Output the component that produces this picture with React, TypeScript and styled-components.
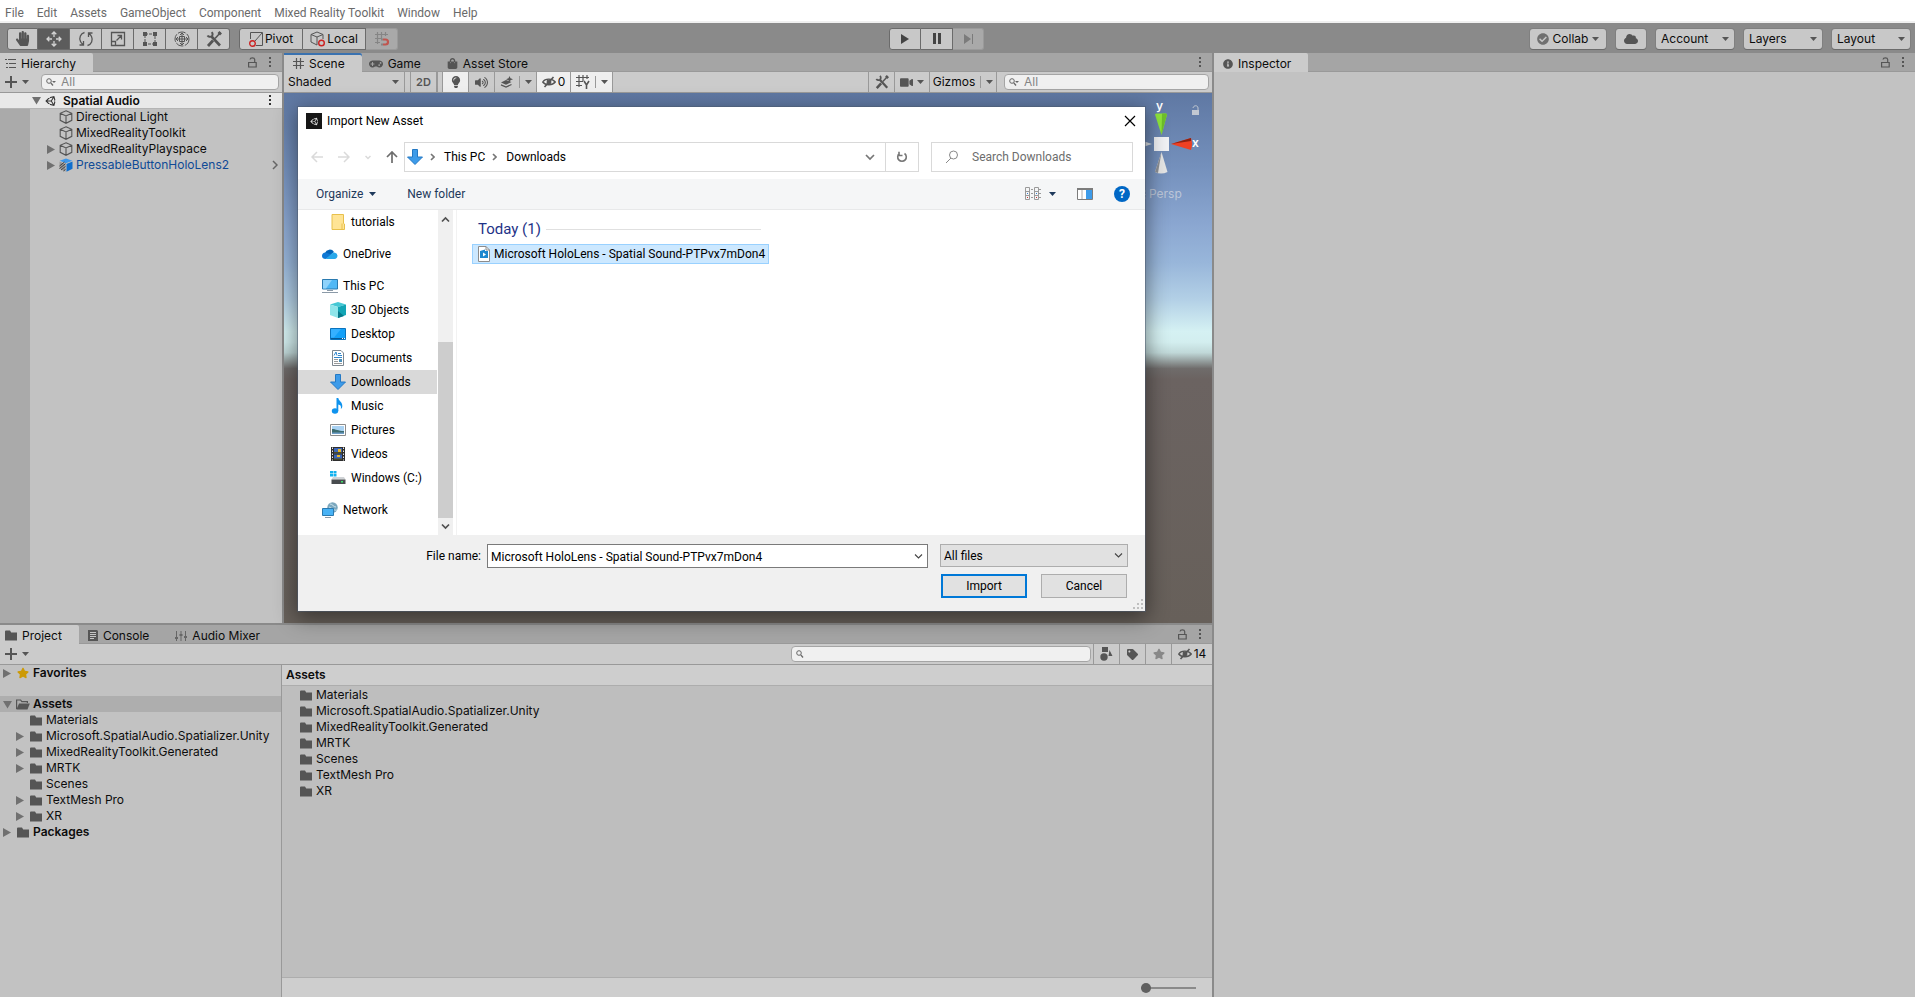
import React from 'react';
import styled, { createGlobalStyle, css } from 'styled-components';
import {
  FaUnity, FaHandPaper, FaGamepad, FaShoppingBag, FaInfoCircle, FaCloud, FaTag, FaStar,
  FaLightbulb, FaVolumeUp, FaVideo, FaCheckCircle,
} from 'react-icons/fa';

const GlobalStyle = createGlobalStyle`
  *, *::before, *::after { box-sizing: border-box; }
  body { margin: 0; background: #8a8a8a; }
  button, input, select { font: inherit; color: inherit; margin: 0; padding: 0; border: 0; background: none; border-radius: 0; outline: none; }
  select, input { appearance: none; }
  svg { display: block; flex: none; }
  ul { list-style: none; margin: 0; padding: 0; }
`;

const unityFont = css`font: 400 12px/16px Inter, "Liberation Sans", sans-serif;`;
const windowsFont = css`font: 400 12px/16px Roboto, "Liberation Sans", sans-serif;`;

/* ---------- icons ---------- */

type IconProps = { size?: number; color?: string };

const Caret = ({ color = '#555' }: IconProps) => (
  <svg width="7" height="4" viewBox="0 0 7 4"><path d="M0 0h7L3.5 4z" fill={color} /></svg>
);

const Fold = ({ open }: { open?: boolean }) => (
  <svg width="9" height="9" viewBox="0 0 9 9">
    <path d={open ? 'M0 1h9L4.5 8.500z' : 'M0 0v9l8-4.500z'} fill="#707070" />
  </svg>
);

const MoveIcon = () => (
  <svg width="16" height="16" viewBox="0 0 16 16" fill="none" stroke="#d2d2d2" strokeWidth="1.300">
    <path d="M8 1v5M8 10v5M1 8h5M10 8h5M5.700 3.300L8 1l2.300 2.300M5.700 12.700L8 15l2.300-2.300M3.300 5.700L1 8l2.300 2.300M12.700 5.700L15 8l-2.300 2.300" />
  </svg>
);

const RotateIcon = () => (
  <svg width="16" height="16" viewBox="0 0 16 16" fill="none" stroke="#555" strokeWidth="1.300">
    <path d="M6.500 1.500C2.500 2.500.8 7 2.500 10.500c.6 1.300 1.300 2 2.500 3M1.500 14h4v-4M9.500 14.500c4-1 5.700-5.500 4-9-.6-1.300-1.300-2-2.500-3M14.500 2h-4v4" />
  </svg>
);

const ScaleIcon = () => (
  <svg width="16" height="16" viewBox="0 0 16 16" fill="none" stroke="#555" strokeWidth="1.300">
    <path d="M1.500 1.500h13v13h-13zM1.500 10.500h4v4M6.500 9.500l5-5M7.500 4.500h4v4" />
  </svg>
);

const RectIcon = () => (
  <svg width="16" height="16" viewBox="0 0 16 16">
    <path d="M3 3h10v10H3z" fill="none" stroke="#555" strokeDasharray="3 1" />
    <path d="M1 1h4v4H1zM11 1h4v4h-4zM1 11h4v4H1zM11 11h4v4h-4z" fill="#555" />
  </svg>
);

const TransformIcon = () => (
  <svg width="16" height="16" viewBox="0 0 16 16" fill="none" stroke="#555">
    <circle cx="8" cy="8" r="7" strokeDasharray="8 1.500" />
    <path d="M8 2v12M2 8h12M6 4l2-2 2 2M6 12l2 2 2-2M4 6L2 8l2 2M12 6l2 2-2 2M5.500 5.500h5v5h-5z" />
  </svg>
);

const ToolsIcon = ({ size = 16 }: IconProps) => (
  <svg width={size} height={size} viewBox="0 0 16 16" fill="none" stroke="#555">
    <path d="M5.500 5.500l8.500 9" strokeWidth="2.600" />
    <path d="M1.500 4.500c1 1.500 3 1.700 4.200.8 1.200-1 1.200-3 0-4.200" strokeWidth="2" />
    <path d="M14.500 1.500L9 7.500" strokeWidth="1.600" />
    <path d="M12.500 1L15 3.500M7 9.500L2 15" strokeWidth="2.800" />
  </svg>
);

const PivotIcon = () => (
  <svg width="15" height="16" viewBox="0 0 15 16" fill="none" stroke="#555">
    <path d="M1.500 8V1.500h12v13H7M13 2L6 10" />
    <circle cx="3.500" cy="12.500" r="2.800" stroke="#c22" strokeWidth="1.400" />
  </svg>
);

const Cube = ({ size = 14, color = '#555' }: IconProps) => (
  <svg width={size} height={size} viewBox="0 0 14 14" fill="none" stroke={color} strokeWidth="1.100">
    <path d="M7 .8l5.800 2.500v7L7 13.300l-5.800-3v-7zM1.200 3.300L7 6l5.800-2.700M7 6v7.300" />
  </svg>
);

const LocalIcon = () => (
  <svg width="16" height="16" viewBox="0 0 16 16" fill="none" stroke="#555">
    <path d="M7 1l6 2.500V8M7 14l-6-3V3.500L7 1M1 3.500L7 6l6-2.500M7 6v8" />
    <circle cx="11.500" cy="12" r="2.800" stroke="#c22" strokeWidth="1.400" />
  </svg>
);

const SnapIcon = () => (
  <svg width="16" height="16" viewBox="0 0 16 16" fill="none" stroke="#858585" strokeWidth="1.200">
    <path d="M3.500 1v12M7.500 1v7M11.500 1v4M1 3.500h13M1 7.500h6M1 11.500h5" />
    <path d="M9 8.500h2.500a2.500 2.500 0 010 5H9" stroke="#c0564f" strokeWidth="2.200" />
    <path d="M7 8.500h2M7 13.500h2" strokeWidth="2.200" />
  </svg>
);

const PrefabCube = () => (
  <svg width="14" height="14" viewBox="0 0 14 14">
    <path d="M7 .5l6.300 2.300L7 5.300.7 2.800z" fill="#3d97ea" />
    <path d="M7.500 6l6-2.500v7.200l-6 3z" fill="#0f6fcf" />
    <path d="M.5 3.500l6 2.500v7.700l-6-3z" fill="#999" />
    <path d="M.5 8l5-4M.5 10.500l6-4.800M2 12l4.500-3.600M4.500 13l2-1.600" stroke="#444" />
  </svg>
);

const Dots = ({ color = '#555' }: IconProps) => (
  <svg width="3" height="11" viewBox="0 0 3 11" fill={color}><path d="M0 0h2v2H0zM0 4h2v2H0zM0 8h2v2H0z" /></svg>
);

const LockIcon = () => (
  <svg width="9" height="11" viewBox="0 0 9 11" fill="none" stroke="#555" strokeWidth="1.200">
    <path d="M.6 5.500h7.600v4.500H.6zM2 2.500C2.300.3 6.500.3 6.700 2.500v3" />
  </svg>
);

const HierarchyIcon = () => (
  <svg width="11" height="9" viewBox="0 0 11 9" fill="#555">
    <path d="M0 0h2v1H0zM3 0h8v1H3zM1 4h2v1H1zM4 4h7v1H4zM1 8h2v1H1zM4 8h7v1H4z" />
  </svg>
);

const HashIcon = () => (
  <svg width="11" height="11" viewBox="0 0 11 11" stroke="#555" strokeWidth="1.200"><path d="M3.500 0v11M7.500 0v11M0 3.500h11M0 7.500h11" /></svg>
);

const PlusIcon = () => (
  <svg width="12" height="12" viewBox="0 0 12 12" fill="#555"><path d="M5 0h2v5h5v2H7v5H5V7H0V5h5z" /></svg>
);

const SearchIcon = ({ menu }: { menu?: boolean }) => (
  <svg width="10" height="8" viewBox="0 0 10 8" fill="none" stroke="#666">
    <circle cx="3" cy="3" r="2.300" /><path d="M4.800 4.800L7 7.500" strokeWidth="1.300" />
    {menu && <path d="M6 3h4L8 5z" fill="#666" stroke="none" />}
  </svg>
);

const FolderIcon = () => (
  <svg width="12" height="11" viewBox="0 0 12 11"><path d="M0 1.500Q0 .5 1 .5h4l1.200 2H12v8H0z" fill="#555" /></svg>
);

const OpenFolderIcon = () => (
  <svg width="14" height="11" viewBox="0 0 14 11">
    <path d="M.6 10V1h4l1.200 1.600h5.600V4" fill="none" stroke="#555" strokeWidth="1.200" />
    <path d="M3 4.500h10.800l-2.300 6H.4z" fill="#555" />
  </svg>
);

const ConsoleIcon = () => (
  <svg width="10" height="11" viewBox="0 0 10 11"><path d="M1 0h8l1 1v10H0V0z" fill="#555" /><path d="M2 2.500h6M2 4.500h6M2 6.500h6M2 8.500h4" stroke="#c4c4c4" /></svg>
);

const MixerIcon = () => (
  <svg width="12" height="10" viewBox="0 0 12 10" fill="#666">
    <path d="M1 0h1v10H1zM5.500 0h1v10h-1zM10 0h1v10h-1zM0 6h3v2H0zM4.500 3h3v2h-3zM9 5h3v2H9z" />
  </svg>
);

const EffectsIcon = () => (
  <svg width="14" height="12" viewBox="0 0 14 12">
    <path d="M1 6.500l5-2.500 5.500 2L6 8.700z" fill="#555" />
    <path d="M1 8.800L6 11l5.500-2.500" fill="none" stroke="#555" strokeWidth="1.300" />
    <path d="M9.500 0l1 2.300 2.500.9-2.500 1-1 2.300-1-2.300-2.500-1 2.500-.9z" fill="#555" />
  </svg>
);

const EyeOffIcon = () => (
  <svg width="14" height="12" viewBox="0 0 14 12" fill="none" stroke="#555" strokeWidth="1.300">
    <path d="M.7 6C3 2.500 10 2 13.300 6 10.500 9.500 3.500 9.800.7 6z" /><circle cx="7" cy="6" r="1.800" fill="#555" /><path d="M2.500 11L11.500 1" strokeWidth="1.600" />
  </svg>
);

const GridYIcon = () => (
  <svg width="14" height="14" viewBox="0 0 14 14" fill="none" stroke="#555" strokeWidth="1.200">
    <path d="M3 0v12M7 0v6M11 0v4M0 2.500h13M0 6.500h7M0 10.500h6" /><path d="M8 6l2.500 4L13 6M10.500 10v4" strokeWidth="1.600" />
  </svg>
);

const ShapesIcon = () => (
  <svg width="13" height="14" viewBox="0 0 13 14" fill="#555"><path d="M2 0h6v5H2zM9.500 3l3 6h-4z" /><circle cx="4" cy="10" r="3.700" /></svg>
);

const PlayIcon = () => (
  <svg width="10" height="12" viewBox="0 0 10 12"><path d="M1 1v10l8-5z" fill="#444" /></svg>
);

const StepIcon = () => (
  <svg width="11" height="12" viewBox="0 0 11 12" fill="#7b7b7b"><path d="M1 1v10l7-5zM9 1h1v10H9z" /></svg>
);

const Stroke = ({ d, w = 12, h = 12, color = '#767676', sw = 1.5 }: { d: string; w?: number; h?: number; color?: string; sw?: number }) => (
  <svg width={w} height={h} viewBox={`0 0 ${w} ${h}`} fill="none" stroke={color} strokeWidth={sw}><path d={d} /></svg>
);

const DownloadArrow = () => (
  <svg width="16" height="16" viewBox="0 0 16 16"><path d="M5.500.5h5V8h5L8 15.500.5 8h5z" fill="#3d9be9" stroke="#2479c4" /></svg>
);

const YellowFolder = () => (
  <svg width="16" height="16" viewBox="0 0 16 16"><path d="M2 .5h11.500v9l1 .5v5.500H2z" fill="#ffe495" stroke="#e8c04c" /><path d="M12 9.500v5.500" stroke="#e8c04c" /></svg>
);

const OneDriveIcon = () => (
  <svg width="16" height="16" viewBox="0 0 16 16">
    <path d="M3 7a5 5 0 019-1l-6 5z" fill="#0364b8" /><path d="M3.500 6.500A3.600 3.600 0 000 10c0 2 1.500 3 3.500 3L11 9z" fill="#0f78d4" />
    <path d="M10 7.500a3 3 0 013-.8 3.200 3.200 0 01-.5 6.300H3.500z" fill="#28a8ea" />
  </svg>
);

const PcIcon = () => (
  <svg width="16" height="16" viewBox="0 0 16 16"><path d="M.5 1.500h15v9.500H.5z" fill="#51b8f5" stroke="#2a7ab0" /><path d="M1 2h9L4 10.500H1z" fill="#8fd3fb" /><path d="M5 12.500h6M0 14.500h16" stroke="#8b9aa8" /></svg>
);

const ObjectsIcon = () => (
  <svg width="16" height="16" viewBox="0 0 16 16"><path d="M8 0l8 2.500L8 5 0 2.500z" fill="#45c8d4" /><path d="M0 2.500L8 5v11l-8-3z" fill="#8fe5ea" /><path d="M16 2.500L8 5v11l8-3z" fill="#13a5b5" /><path d="M8 9l6 5-6 2z" fill="#07798a" /></svg>
);

const DesktopIcon = () => (
  <svg width="16" height="16" viewBox="0 0 16 16"><path d="M.5 2.500h15v11H.5z" fill="#12a0f8" stroke="#0a73bd" /><path d="M1 3h10L4 11.500H1z" fill="#35b0ff" /><path d="M1 12.500h14" stroke="#075a96" /><path d="M12 12.500h1M14 12.500h1" stroke="#fff" /></svg>
);

const DocumentIcon = () => (
  <svg width="16" height="16" viewBox="0 0 16 16"><path d="M2.500.5h8.500l2.500 2.500v12.500h-11z" fill="#fff" stroke="#7d8790" /><path d="M4 5.500l2-3.500 1 3.500M8 3.500h3M8 5.500h4M4 7.500h8" fill="none" stroke="#2f86cc" /><path d="M4 9.500h4M4 11.500h4M4 13.500h8" stroke="#9a9a9a" /><path d="M9 9h3v3H9z" fill="#4b8fb8" /></svg>
);

const MusicIcon = () => (
  <svg width="16" height="16" viewBox="0 0 16 16" fill="#0f93ee"><ellipse cx="5" cy="13" rx="3.200" ry="2.700" /><path d="M6.500 0h1.800c.3 3 4.500 4 4 8.500-.2 1.500-.8 2-1.500 2.500.8-3-.5-4-2.500-4.500V13H6.500z" /></svg>
);

const PictureIcon = () => (
  <svg width="16" height="16" viewBox="0 0 16 16"><path d="M.5 2.500h15v11H.5z" fill="#fff" stroke="#8c8c8c" /><path d="M2 4h12v8H2z" fill="#a9d2f3" /><path d="M2 7c4 0 6 2 12 2v3H2z" fill="#3c6c70" /><path d="M2 10.500h12V12H2z" fill="#6f9fc8" /></svg>
);

const VideoIcon = () => (
  <svg width="16" height="16" viewBox="0 0 16 16"><path d="M1 1h14v14H1z" fill="#2d2d2d" /><path d="M4 2h8v5.500H4zM4 8.500h8V14H4z" fill="#3c66b8" /><path d="M8 3h3v3H8zM7 9h3v2H7z" fill="#e8b92e" /><path d="M4 6h8v1.500H4zM4 12.500h8V14H4z" fill="#4a4a2a" /><path d="M2.500 1.500v13M13.500 1.500v13" stroke="#e8e8e8" strokeDasharray="1.500 1.500" /></svg>
);

const DriveIcon = () => (
  <svg width="16" height="16" viewBox="0 0 16 16"><path d="M0 1h3v2.500H0zM3.500 1h3v2.500h-3zM0 4h3v2.500H0zM3.500 4h3v2.500h-3z" fill="#12b1ee" /><path d="M3 7h11l1.500 2.500H1.500z" fill="#d0d3d6" /><path d="M1.500 9.500h14V14h-14z" fill="#484c4f" /><path d="M11 11h2v1.500h-2z" fill="#3fe06a" /></svg>
);

const NetworkIcon = () => (
  <svg width="16" height="16" viewBox="0 0 16 16"><circle cx="10.500" cy="5.500" r="5.200" fill="#7ba7bd" /><path d="M8 2c3 0 3 3 6 3M7 5c3 1 5 4 8 3" stroke="#c9e2ee" fill="none" /><path d="M.5 6.500h11v7H.5z" fill="#48b2f5" stroke="#2a7ab0" /><path d="M3 15.500h6" stroke="#8b9aa8" /></svg>
);

const MediaFileIcon = () => (
  <svg width="12" height="16" viewBox="0 0 12 16"><path d="M.5.5H8l3.500 3.500v11.500H.5z" fill="#fff" stroke="#8c8c8c" /><path d="M8 .5V4h3.500" fill="none" stroke="#8c8c8c" /><path d="M2 5l5-1.500V5h3v7H2z" fill="#1e88cf" /><path d="M5 6.500l3 2-3 2z" fill="#fff" /></svg>
);

const ViewModeIcon = () => (
  <svg width="18" height="14" viewBox="0 0 18 14" fill="none" stroke="#9a9a9a">
    <path d="M.5.5h4v12h-4zM9.500.5h4v12h-4zM0 4.500h5M0 8.500h5M9 4.500h5M9 8.500h5M6 2.500h2M6 6.500h2M6 10.500h2M14 2.500h2M14 6.500h2M14 10.500h2" />
    <path d="M2 6h1v1H2zM11 6h1v1h-1z" fill="#3b7fd0" stroke="none" /><path d="M2 10h1v1H2zM11 10h1v1h-1z" fill="#c33" stroke="none" />
  </svg>
);

const PreviewIcon = () => (
  <svg width="16" height="12" viewBox="0 0 16 12"><path d="M.5.5h15v11H.5z" fill="#fff" stroke="#7c7c7c" /><path d="M0 1h16" stroke="#7c7c7c" strokeWidth="2" /><path d="M5 2v9" stroke="#aaa" /><path d="M9 2h6v9H9z" fill="#3d9be9" /></svg>
);

/* ---------- page frame ---------- */

const Page = styled.div`
  ${unityFont}
  min-height: 100vh;
  display: flex;
  flex-direction: column;
  color: #0c0c0c;
  background: #8a8a8a;
`;

const MenuBar = styled.nav`
  ${windowsFont}
  display: flex;
  align-items: center;
  gap: 13px;
  height: 23px;
  padding: 4px 5px 0;
  background: #fff;
  border-bottom: 2px solid #f0f0f0;
  color: #6a6a6a;
`;

const Toolbar = styled.header`
  display: flex;
  align-items: center;
  height: 30px;
  padding: 1px 5px 0 7px;
`;

const Spacer = styled.span<{ $grow?: number }>`
  flex: ${(p) => p.$grow ?? 1} 1 0;
`;

const ButtonGroup = styled.div`
  display: flex;
  margin-right: 9px;
`;

const ToolButton = styled.button<{ $active?: boolean; $faded?: boolean; $width?: number }>`
  display: flex;
  align-items: center;
  justify-content: center;
  gap: 1px;
  width: ${(p) => p.$width ?? 32}px;
  height: 22px;
  border: 1px solid ${(p) => (p.$faded ? '#9a9a9a' : '#6b6b6b')};
  background: ${(p) => (p.$active ? '#5c5c5c' : p.$faded ? '#a9a9a9' : '#c8c8c8')};
  & + & { border-left-width: 0; }
  &:first-child { border-radius: 3px 0 0 3px; }
  &:last-child { border-radius: 0 3px 3px 0; }
  color: ${(p) => (p.$faded ? '#7b7b7b' : '#0c0c0c')};
`;

const RightControls = styled.div`
  display: flex;
  gap: 10px;
`;

const controlBox = css`
  height: 20px;
  border-radius: 3px;
  background: #c8c8c8;
  box-shadow: 0 1px 0 #6b6b6b, 0 0 0 1px #808080;
`;

const TopButton = styled.button<{ $width: number }>`
  ${controlBox}
  display: flex;
  align-items: center;
  justify-content: center;
  gap: 4px;
  width: ${(p) => p.$width}px;
`;

const SelectWrap = styled.label<{ $boxed?: boolean; $width: number; $inset: number }>`
  position: relative;
  display: flex;
  align-items: center;
  width: ${(p) => p.$width}px;
  ${(p) => p.$boxed && controlBox}
  select { width: 100%; padding-left: ${(p) => p.$inset}px; line-height: 20px; }
  svg { position: absolute; right: 5px; pointer-events: none; }
`;

const Workspace = styled.main`
  flex: 1;
  display: grid;
  grid-template-columns: 1212fr 701fr;
  gap: 2px;
`;

const MainColumn = styled.div`
  display: grid;
  grid-template-rows: 570fr 372fr;
  gap: 2px;
  min-width: 0;
`;

const UpperRow = styled.div`
  display: grid;
  grid-template-columns: 282px 1fr;
  gap: 2px;
`;

const Panel = styled.section`
  display: flex;
  flex-direction: column;
  min-width: 0;
  background: #c2c2c2;
`;

const TabStrip = styled.div`
  display: flex;
  align-items: stretch;
  height: 19px;
  padding-right: 6px;
  background: #a5a5a5;
  border-bottom: 1px solid #999;
`;

const Tab = styled.button<{ $active?: boolean; $accent?: boolean; $pad?: number }>`
  display: flex;
  align-items: center;
  gap: 5px;
  height: 19px;
  padding: 2px 17px 0 ${(p) => p.$pad ?? 9}px;
  background: ${(p) => (p.$active ? '#cbcbcb' : 'transparent')};
  box-shadow: ${(p) => (p.$accent ? 'inset 0 2px 0 #3a72b0' : 'none')};
  border-radius: 0 2px 0 0;
`;

const IconButton = styled.button`
  display: flex;
  align-items: center;
  justify-content: center;
  min-width: 12px;
  margin-left: 6px;
`;

const PanelBar = styled.div<{ $end?: number }>`
  display: flex;
  align-items: center;
  height: 21px;
  padding-right: ${(p) => p.$end ?? 3}px;
  background: #cbcbcb;
  border-bottom: 1px solid #999;
`;

const AddButton = styled.button`
  display: flex;
  align-items: center;
  gap: 5px;
  padding-left: 5px;
  margin-right: 12px;
`;

const SearchBox = styled.label<{ $width?: number }>`
  flex: ${(p) => (p.$width ? `0 0 ${p.$width}px` : '1')};
  min-width: 0;
  display: flex;
  align-items: center;
  gap: 5px;
  height: 16px;
  padding: 0 4px;
  border: 1px solid #a5a5a5;
  border-radius: 4px;
  background: #f0f0f0;
  input { flex: 1; width: 0; min-width: 0; height: 14px; }
  input::placeholder { color: #858585; opacity: 1; }
`;

const BarButton = styled.button<{ $width: number; $on?: boolean; $last?: boolean }>`
  display: flex;
  align-items: center;
  justify-content: center;
  gap: 2px;
  flex: none;
  width: ${(p) => p.$width}px;
  height: 20px;
  border-left: 1px solid #999;
  border-right: ${(p) => (p.$last ? '1px solid #999' : '0')};
  background: ${(p) => (p.$on ? '#efefef' : 'transparent')};
  color: #0c0c0c;
`;

const ModeLabel = styled.b`
  font-weight: 600;
  font-size: 11px;
  color: #555;
`;

const InnerRule = styled.span`
  width: 1px;
  height: 12px;
  margin: 0 3px;
  background: #999;
`;

/* ---------- hierarchy ---------- */

const SceneRow = styled.div`
  display: flex;
  align-items: center;
  gap: 4px;
  height: 16px;
  padding: 0 10px 0 32px;
  background: #e9e9e9;
  border-bottom: 1px solid #b5b5b5;
  font-weight: 600;
`;

const SceneName = styled.span`
  flex: 1;
  padding-left: 2px;
`;

const HierarchyBody = styled.div`
  flex: 1;
  display: grid;
  grid-template-columns: 30px 1fr;
`;

const Gutter = styled.div`
  background: #aaa;
`;

const ObjectRow = styled.li<{ $prefab?: boolean }>`
  display: flex;
  align-items: center;
  height: 16px;
  padding: 0 4px 0 17px;
  gap: 3px;
  color: ${(p) => (p.$prefab ? '#0f4a96' : '#0c0c0c')};
`;

const FoldSlot = styled.span<{ $width?: number }>`
  flex: none;
  width: ${(p) => p.$width ?? 9}px;
`;

/* ---------- scene ---------- */

const Viewport = styled.div`
  position: relative;
  flex: 1;
  min-height: 420px;
  background: linear-gradient(#5f78a3 0%, #7490bc 14%, #8ba7d1 25%, #98b6da 32%, #b3d0e6 39%, #d5f1f3 45%, #d3eeef 47%, #c0d8d8 49%, #6f6c6b 52%, #6b6361 54%, #67605a 100%);
`;

const Gizmo = styled.div`
  position: absolute;
  top: 4px;
  right: 0;
  width: 72px;
  display: flex;
  flex-direction: column;
  gap: 9px;
`;

const ProjectionButton = styled.button`
  display: flex;
  align-items: center;
  gap: 3px;
  padding-left: 1px;
  color: #bcc6d8;
`;

/* ---------- import dialog ---------- */

const Dialog = styled.div`
  ${windowsFont}
  position: absolute;
  z-index: 2;
  top: 14px;
  left: 14px;
  right: 67px;
  bottom: 12px;
  display: flex;
  flex-direction: column;
  background: #fff;
  color: #000;
  box-shadow: 0 0 0 1px #4b5a6e80, 0 5px 20px 2px #00000073;
`;

const TitleBar = styled.div`
  display: flex;
  align-items: center;
  gap: 5px;
  height: 28px;
  padding: 0 9px 0 8px;
`;

const DialogTitle = styled.h1`
  flex: 1;
  margin: 0;
  font-size: 12px;
  font-weight: 400;
`;

const AppBadge = styled.span`
  display: grid;
  place-items: center;
  width: 16px;
  height: 16px;
  background: #161616;
`;

const PlainButton = styled.button`
  display: flex;
  align-items: center;
  gap: 6px;
`;

const NavRow = styled.div`
  display: flex;
  align-items: center;
  height: 44px;
  padding: 0 12px 0 13px;
`;

const NavButtons = styled.div`
  display: flex;
  align-items: center;
  gap: 15px;
  width: 93px;
`;

const AddressBar = styled.div`
  flex: 1;
  display: flex;
  align-items: center;
  height: 30px;
  padding-left: 2px;
  border: 1px solid #d9d9d9;
`;

const Crumb = styled.button`
  margin: 0 9px 0 7px;
`;

const RefreshButton = styled.button`
  display: grid;
  place-items: center;
  width: 33px;
  height: 28px;
  margin-left: 10px;
  border-left: 1px solid #d9d9d9;
`;

const DialogSearch = styled.label`
  display: flex;
  align-items: center;
  gap: 13px;
  width: 202px;
  height: 30px;
  margin-left: 12px;
  padding: 0 13px;
  border: 1px solid #d9d9d9;
  input { flex: 1; width: 0; min-width: 0; }
  input::placeholder { color: #6d6d6d; opacity: 1; }
`;

const CommandBar = styled.div`
  display: flex;
  align-items: center;
  height: 31px;
  padding: 0 15px 0 18px;
  background: #f5f6f7;
  border-bottom: 1px solid #e8e9ea;
  color: #1e395b;
`;

const CommandGroup = styled.div<{ $gap: number }>`
  display: flex;
  align-items: center;
  gap: ${(p) => p.$gap}px;
`;

const HelpBadge = styled.button`
  width: 16px;
  height: 16px;
  border-radius: 50%;
  background: #0067c5;
  color: #fff;
  font-size: 12px;
  font-weight: 700;
  line-height: 16px;
  text-align: center;
`;

const DialogBody = styled.div`
  flex: 1;
  display: grid;
  grid-template-columns: 140px 15px 1fr;
  min-height: 0;
`;

const PlaceList = styled.ul`
  overflow: hidden;
`;

const Place = styled.li<{ $level: number; $gap?: boolean; $selected?: boolean }>`
  display: flex;
  align-items: center;
  gap: 5px;
  height: 24px;
  margin: ${(p) => (p.$gap ? 8 : 0)}px 1px 0 0;
  padding-left: ${(p) => 16 + p.$level * 8}px;
  white-space: nowrap;
  background: ${(p) => (p.$selected ? '#d9d9d9' : 'transparent')};
`;

const ScrollTrack = styled.div`
  display: flex;
  flex-direction: column;
  align-items: center;
  justify-content: space-between;
  padding: 6px 0 5px;
  background: #f0f0f0;
`;

const ScrollThumb = styled.div`
  width: 15px;
  flex: 0 0 56%;
  margin: auto 0 5px;
  background: #cdcdcd;
`;

const FileArea = styled.div`
  margin-left: 3px;
  padding: 9px 15px;
  border-left: 1px solid #f2f2f2;
`;

const GroupHeading = styled.h2`
  display: flex;
  align-items: center;
  gap: 5px;
  width: 283px;
  margin: 0 0 5px 6px;
  font-size: 15px;
  font-weight: 400;
  line-height: 20px;
  color: #1e3287;
  &::after { content: ''; flex: 1; height: 1px; background: #e0e0e0; }
`;

const FileItem = styled.button`
  display: flex;
  align-items: center;
  gap: 4px;
  width: 297px;
  height: 20px;
  padding: 0 5px;
  border: 1px solid #99d1ff;
  background: #cce8ff;
  white-space: nowrap;
`;

const DialogFooter = styled.form`
  display: grid;
  grid-template-columns: 183px 1fr 188px;
  gap: 6px 0;
  height: 76px;
  padding: 9px 17px 13px 0;
  background: #f0f0f0;
  position: relative;
`;

const FieldLabel = styled.label`
  align-self: center;
  text-align: right;
`;

const NameField = styled.div`
  display: flex;
  align-items: center;
  height: 24px;
  margin: 0 12px 0 6px;
  padding: 1px 4px 0 3px;
  border: 1px solid #7a7a7a;
  background: #fff;
  input { flex: 1; min-width: 0; }
`;

const TypeSelect = styled.div`
  position: relative;
  display: flex;
  align-items: center;
  height: 23px;
  border: 1px solid #adadad;
  background: #e1e1e1;
  select { width: 100%; height: 21px; padding-left: 3px; }
  svg { position: absolute; right: 4px; pointer-events: none; }
`;

const DialogActions = styled.div`
  grid-column: 3;
  display: flex;
  justify-content: space-between;
  padding: 0 1px;
`;

const ActionButton = styled.button<{ $primary?: boolean }>`
  width: 86px;
  height: 24px;
  border: ${(p) => (p.$primary ? '2px solid #0078d7' : '1px solid #adadad')};
  background: #e1e1e1;
`;

const Grip = styled.span`
  position: absolute;
  right: 1px;
  bottom: 1px;
`;

/* ---------- project ---------- */

const ProjectBody = styled.div`
  flex: 1;
  display: grid;
  grid-template-columns: 282px 1fr;
`;

const Tree = styled.ul`
  border-right: 1px solid #999;
`;

const TreeRow = styled.li<{ $depth: number; $bold?: boolean; $selected?: boolean; $gap?: boolean }>`
  display: flex;
  align-items: center;
  gap: 4px;
  height: 16px;
  margin-bottom: ${(p) => (p.$gap ? 15 : 0)}px;
  padding-left: ${(p) => 3 + p.$depth * 13}px;
  font-weight: ${(p) => (p.$bold ? 600 : 400)};
  background: ${(p) => (p.$selected ? '#aeaeae' : 'transparent')};
`;

const IconSlot = styled.span`
  display: grid;
  place-items: center;
  flex: none;
  width: 13px;
`;

const AssetPane = styled.div`
  display: flex;
  flex-direction: column;
  background: #bebebe;
`;

const AssetPath = styled.h2`
  height: 21px;
  margin: 0;
  padding-left: 4px;
  font-size: 12px;
  font-weight: 600;
  line-height: 20px;
  background: #cecece;
  border-bottom: 1px solid #adadad;
`;

const AssetList = styled.ul`
  flex: 1;
  padding-top: 1px;
`;

const AssetRow = styled.li`
  display: flex;
  align-items: center;
  gap: 4px;
  height: 16px;
  padding-left: 18px;
`;

const AssetFooter = styled.div`
  display: flex;
  align-items: center;
  justify-content: flex-end;
  height: 20px;
  padding-right: 16px;
  background: #cecece;
  border-top: 1px solid #adadad;
`;

const ZoomSlider = styled.input`
  width: 55px;
  height: 12px;
  &::-webkit-slider-runnable-track { height: 2px; background: #8a8a8a; }
  &::-webkit-slider-thumb { appearance: none; width: 10px; height: 10px; margin-top: -4px; border-radius: 50%; background: #606060; }
`;

/* ---------- data ---------- */

const menus = ['File', 'Edit', 'Assets', 'GameObject', 'Component', 'Mixed Reality Toolkit', 'Window', 'Help'];

const tools = [
  { name: 'Hand', icon: <FaHandPaper size={15} color="#555" /> },
  { name: 'Move', icon: <MoveIcon />, active: true },
  { name: 'Rotate', icon: <RotateIcon /> },
  { name: 'Scale', icon: <ScaleIcon /> },
  { name: 'Rect', icon: <RectIcon /> },
  { name: 'Transform', icon: <TransformIcon /> },
  { name: 'Custom tools', icon: <ToolsIcon /> },
];

const objects = [
  { name: 'Directional Light' },
  { name: 'MixedRealityToolkit' },
  { name: 'MixedRealityPlayspace', fold: true },
  { name: 'PressableButtonHoloLens2', fold: true, prefab: true },
];

const folders = [
  { name: 'Materials' },
  { name: 'Microsoft.SpatialAudio.Spatializer.Unity', fold: true },
  { name: 'MixedRealityToolkit.Generated', fold: true },
  { name: 'MRTK', fold: true },
  { name: 'Scenes' },
  { name: 'TextMesh Pro', fold: true },
  { name: 'XR', fold: true },
];

const places = [
  { name: 'tutorials', level: 2, icon: <YellowFolder /> },
  { name: 'OneDrive', level: 1, icon: <OneDriveIcon />, gap: true },
  { name: 'This PC', level: 1, icon: <PcIcon />, gap: true },
  { name: '3D Objects', level: 2, icon: <ObjectsIcon /> },
  { name: 'Desktop', level: 2, icon: <DesktopIcon /> },
  { name: 'Documents', level: 2, icon: <DocumentIcon /> },
  { name: 'Downloads', level: 2, icon: <DownloadArrow />, selected: true },
  { name: 'Music', level: 2, icon: <MusicIcon /> },
  { name: 'Pictures', level: 2, icon: <PictureIcon /> },
  { name: 'Videos', level: 2, icon: <VideoIcon /> },
  { name: 'Windows (C:)', level: 2, icon: <DriveIcon /> },
  { name: 'Network', level: 1, icon: <NetworkIcon />, gap: true },
];

/* ---------- sections ---------- */

const MainToolbar = () => (
  <Toolbar>
    <ButtonGroup>
      {tools.map((t, i) => (
        <ToolButton key={t.name} aria-label={t.name} $active={t.active} $width={i === 0 ? 31 : 32}>{t.icon}</ToolButton>
      ))}
    </ButtonGroup>
    <ButtonGroup>
      <ToolButton $width={64}><PivotIcon />Pivot</ToolButton>
      <ToolButton $width={63}><LocalIcon />Local</ToolButton>
      <ToolButton $width={32} $faded aria-label="Grid snapping"><SnapIcon /></ToolButton>
    </ButtonGroup>
    <Spacer $grow={482} />
    <ButtonGroup>
      <ToolButton $width={32} aria-label="Play"><PlayIcon /></ToolButton>
      <ToolButton $width={32} aria-label="Pause"><Stroke w={10} h={11} d="M2.500 0v11M7.500 0v11" color="#444" sw={3} /></ToolButton>
      <ToolButton $width={31} $faded aria-label="Step"><StepIcon /></ToolButton>
    </ButtonGroup>
    <Spacer $grow={536} />
    <RightControls>
      <TopButton $width={76}><FaCheckCircle size={12} color="#707070" />Collab<Caret /></TopButton>
      <TopButton $width={30} aria-label="Services"><FaCloud size={14} color="#555" /></TopButton>
      {['Account', 'Layers', 'Layout'].map((name) => (
        <SelectWrap key={name} $boxed $width={78} $inset={5}>
          <select aria-label={name}><option>{name}</option></select>
          <Caret />
        </SelectWrap>
      ))}
    </RightControls>
  </Toolbar>
);

const HierarchyPanel = () => (
  <Panel>
    <TabStrip>
      <Tab $active $pad={5}><HierarchyIcon />Hierarchy</Tab>
      <Spacer />
      <IconButton aria-label="Lock"><LockIcon /></IconButton>
      <IconButton aria-label="Hierarchy options"><Dots /></IconButton>
    </TabStrip>
    <PanelBar>
      <AddButton aria-label="Create"><PlusIcon /><Caret /></AddButton>
      <SearchBox><SearchIcon menu /><input aria-label="Search hierarchy" placeholder="All" /></SearchBox>
    </PanelBar>
    <SceneRow>
      <Fold open /><FaUnity size={12} color="#333" />
      <SceneName>Spatial Audio</SceneName>
      <Dots color="#333" />
    </SceneRow>
    <HierarchyBody>
      <Gutter />
      <ul>
        {objects.map((o) => (
          <ObjectRow key={o.name} $prefab={o.prefab}>
            <FoldSlot>{o.fold && <Fold />}</FoldSlot>
            {o.prefab ? <PrefabCube /> : <Cube />}
            <span>{o.name}</span>
            {o.prefab && <><Spacer /><Stroke w={6} h={10} d="M1 1l4 4-4 4" color="#666" /></>}
          </ObjectRow>
        ))}
      </ul>
    </HierarchyBody>
  </Panel>
);

const SceneGizmo = () => (
  <Gizmo>
    <svg width="72" height="80" viewBox="0 -8 72 80" fontFamily="Inter, sans-serif" fontSize="12" fontWeight="600" fill="#fff">
      <text x="16" y="5">y</text>
      <text x="52" y="42">x</text>
      <path d="M15 9.500l1-1h10l1 1L21.500 30z" fill="#8fe63c" /><path d="M22 8.500h4l1 1-5.500 20z" fill="#6fbf2c" />
      <path d="M31 39l20-6q2 6 0 12z" fill="#ee4023" /><path d="M31 39l20-6v3z" fill="#8e2010" />
      <path d="M21.500 47L15 67q6 3 12.500 0z" fill="#e6e6e6" /><path d="M21.500 47L15 67l3 1z" fill="#8b8f95" />
      <path d="M0 35l12 4-12 4z" fill="#d8dce0" />
      <path d="M14 32h15v14H14z" fill="#f1f2f5" />
      <path d="M52 5h7v5h-7z" fill="#c2c8d2" /><path d="M53 3c.5-3 5-3 5 0v2" fill="none" stroke="#c2c8d2" />
    </svg>
    <ProjectionButton><Stroke w={5} h={9} d="M0 1h5M0 4.500h5M0 8h5" color="#bcc6d8" sw={1} />Persp</ProjectionButton>
  </Gizmo>
);

const ImportDialog = () => (
  <Dialog role="dialog" aria-label="Import New Asset">
    <TitleBar>
      <AppBadge><FaUnity size={9} color="#ddd" /></AppBadge>
      <DialogTitle>Import New Asset</DialogTitle>
      <PlainButton aria-label="Close"><Stroke w={12} h={12} d="M1 1l10 10M11 1L1 11" color="#000" sw={1.2} /></PlainButton>
    </TitleBar>
    <NavRow>
      <NavButtons>
        <PlainButton aria-label="Back"><Stroke d="M12 6H1M6 1L1 6l5 5" color="#dadada" /></PlainButton>
        <PlainButton aria-label="Forward"><Stroke d="M0 6h11M6 1l5 5-5 5" color="#dadada" /></PlainButton>
        <PlainButton aria-label="Recent locations"><Stroke w={6} h={5} d="M.5 1L3 3.500 5.500 1" color="#dadada" /></PlainButton>
        <PlainButton aria-label="Up"><Stroke d="M6 12V1M1 6l5-5 5 5" color="#6d6d6d" sw={1.7} /></PlainButton>
      </NavButtons>
      <AddressBar>
        <DownloadArrow />
        <Crumb aria-label="Folders"><Stroke w={5} h={8} d="M1 1l3 3-3 3" sw={1.6} /></Crumb>
        <PlainButton>This PC</PlainButton>
        <Crumb aria-label="This PC folders"><Stroke w={5} h={8} d="M1 1l3 3-3 3" sw={1.6} /></Crumb>
        <PlainButton>Downloads</PlainButton>
        <Spacer />
        <PlainButton aria-label="Previous locations"><Stroke w={10} h={7} d="M1 1l4 4 4-4" sw={1.7} /></PlainButton>
        <RefreshButton aria-label="Refresh"><Stroke d="M3.500 2.500A4.300 4.300 0 108.500 2.500M3 .800V4.500h3.500" sw={1.6} /></RefreshButton>
      </AddressBar>
      <DialogSearch>
        <Stroke w={14} h={14} d="M1 13l5-5M8.500 1a4 4 0 100 8 4 4 0 100-8z" color="#888" sw={1} />
        <input aria-label="Search Downloads" placeholder="Search Downloads" />
      </DialogSearch>
    </NavRow>
    <CommandBar>
      <CommandGroup $gap={31}>
        <PlainButton>Organize<Caret color="#1e395b" /></PlainButton>
        <PlainButton>New folder</PlainButton>
      </CommandGroup>
      <Spacer />
      <CommandGroup $gap={21}>
        <PlainButton aria-label="Change view"><ViewModeIcon /><Caret color="#1e395b" /></PlainButton>
        <PlainButton aria-label="Preview pane"><PreviewIcon /></PlainButton>
        <HelpBadge aria-label="Help">?</HelpBadge>
      </CommandGroup>
    </CommandBar>
    <DialogBody>
      <PlaceList>
        {places.map((p) => (
          <Place key={p.name} $level={p.level} $gap={p.gap} $selected={p.selected}>{p.icon}<span>{p.name}</span></Place>
        ))}
      </PlaceList>
      <ScrollTrack>
        <Stroke w={9} h={7} d="M1 5.500L4.500 2 8 5.500" color="#505050" sw={1.7} />
        <ScrollThumb />
        <Stroke w={9} h={7} d="M1 1.500L4.500 5 8 1.500" color="#505050" sw={1.7} />
      </ScrollTrack>
      <FileArea>
        <GroupHeading>Today (1)</GroupHeading>
        <FileItem><MediaFileIcon />Microsoft HoloLens - Spatial Sound-PTPvx7mDon4</FileItem>
      </FileArea>
    </DialogBody>
    <DialogFooter onSubmit={(e) => e.preventDefault()}>
      <FieldLabel htmlFor="file-name">File name:</FieldLabel>
      <NameField>
        <input id="file-name" defaultValue="Microsoft HoloLens - Spatial Sound-PTPvx7mDon4" />
        <Stroke w={9} h={7} d="M1 1.500L4.500 5 8 1.500" color="#444" sw={1.1} />
      </NameField>
      <TypeSelect>
        <select aria-label="File type"><option>All files</option></select>
        <Stroke w={9} h={7} d="M1 1.500L4.500 5 8 1.500" color="#444" sw={1.1} />
      </TypeSelect>
      <DialogActions>
        <ActionButton $primary type="submit">Import</ActionButton>
        <ActionButton type="button">Cancel</ActionButton>
      </DialogActions>
      <Grip><svg width="11" height="11" viewBox="0 0 11 11" fill="#bfbfbf"><path d="M8 0h2v2H8zM4 4h2v2H4zM8 4h2v2H8zM0 8h2v2H0zM4 8h2v2H4zM8 8h2v2H8z" /></svg></Grip>
    </DialogFooter>
  </Dialog>
);

const ScenePanel = () => (
  <Panel>
    <TabStrip>
      <Tab $active $accent><HashIcon />Scene</Tab>
      <Tab $pad={7}><FaGamepad size={14} color="#555" />Game</Tab>
      <Tab><FaShoppingBag size={11} color="#555" />Asset Store</Tab>
      <Spacer />
      <IconButton aria-label="Scene options"><Dots /></IconButton>
    </TabStrip>
    <PanelBar>
      <SelectWrap $width={120} $inset={4}>
        <select aria-label="Draw mode"><option>Shaded</option></select>
        <Caret />
      </SelectWrap>
      <BarButton as="span" $width={6} />
      <BarButton $width={27} $last><ModeLabel>2D</ModeLabel></BarButton>
      <BarButton as="span" $width={5} />
      <BarButton $width={26} $on aria-label="Lighting"><FaLightbulb size={12} color="#555" /></BarButton>
      <BarButton $width={26} aria-label="Audio"><FaVolumeUp size={13} color="#555" /></BarButton>
      <BarButton $width={42} aria-label="Effects"><EffectsIcon /><InnerRule /><Caret /></BarButton>
      <BarButton $width={34} $on><EyeOffIcon />0</BarButton>
      <BarButton $width={43} $on $last aria-label="Grid"><GridYIcon /><InnerRule /><Caret /></BarButton>
      <Spacer />
      <BarButton $width={26} aria-label="Component tools"><ToolsIcon size={14} /></BarButton>
      <BarButton $width={35} aria-label="Camera"><FaVideo size={13} color="#555" /><span /><Caret /></BarButton>
      <BarButton $width={68} $last>Gizmos<InnerRule /><Caret /></BarButton>
      <FoldSlot $width={7} />
      <SearchBox $width={205}><SearchIcon menu /><input aria-label="Search scene" placeholder="All" /></SearchBox>
    </PanelBar>
    <Viewport>
      <SceneGizmo />
      <ImportDialog />
    </Viewport>
  </Panel>
);

const ProjectPanel = () => (
  <Panel>
    <TabStrip>
      <Tab $active $pad={5}><FolderIcon />Project</Tab>
      <Tab><ConsoleIcon />Console</Tab>
      <Tab><MixerIcon />Audio Mixer</Tab>
      <Spacer />
      <IconButton aria-label="Lock"><LockIcon /></IconButton>
      <IconButton aria-label="Project options"><Dots /></IconButton>
    </TabStrip>
    <PanelBar $end={0}>
      <AddButton aria-label="Create"><PlusIcon /><Caret /></AddButton>
      <Spacer />
      <SearchBox $width={300}><SearchIcon /><input aria-label="Search project" /></SearchBox>
      <FoldSlot $width={2} />
      <BarButton $width={26} aria-label="Search by type"><ShapesIcon /></BarButton>
      <BarButton $width={26} aria-label="Search by label"><FaTag size={11} color="#555" /></BarButton>
      <BarButton $width={26} aria-label="Save search"><FaStar size={12} color="#888" /></BarButton>
      <BarButton $width={41}><EyeOffIcon />14</BarButton>
    </PanelBar>
    <ProjectBody>
      <Tree>
        <TreeRow $depth={0} $bold $gap><FoldSlot><Fold /></FoldSlot><IconSlot><FaStar size={12} color="#cc9a06" /></IconSlot>Favorites</TreeRow>
        <TreeRow $depth={0} $bold $selected><FoldSlot><Fold open /></FoldSlot><IconSlot><OpenFolderIcon /></IconSlot>Assets</TreeRow>
        {folders.map((f) => (
          <TreeRow key={f.name} $depth={1}><FoldSlot>{f.fold && <Fold />}</FoldSlot><IconSlot><FolderIcon /></IconSlot>{f.name}</TreeRow>
        ))}
        <TreeRow $depth={0} $bold><FoldSlot><Fold /></FoldSlot><IconSlot><FolderIcon /></IconSlot>Packages</TreeRow>
      </Tree>
      <AssetPane>
        <AssetPath>Assets</AssetPath>
        <AssetList>
          {folders.map((f) => <AssetRow key={f.name}><FolderIcon />{f.name}</AssetRow>)}
        </AssetList>
        <AssetFooter><ZoomSlider type="range" aria-label="Icon size" min={0} max={100} defaultValue={0} /></AssetFooter>
      </AssetPane>
    </ProjectBody>
  </Panel>
);

const InspectorPanel = () => (
  <Panel>
    <TabStrip>
      <Tab $active><FaInfoCircle size={10} color="#555" />Inspector</Tab>
      <Spacer />
      <IconButton aria-label="Lock"><LockIcon /></IconButton>
      <IconButton aria-label="Inspector options"><Dots /></IconButton>
    </TabStrip>
  </Panel>
);

export default function App() {
  return (
    <Page>
      <GlobalStyle />
      <MenuBar>{menus.map((m) => <button key={m}>{m}</button>)}</MenuBar>
      <MainToolbar />
      <Workspace>
        <MainColumn>
          <UpperRow>
            <HierarchyPanel />
            <ScenePanel />
          </UpperRow>
          <ProjectPanel />
        </MainColumn>
        <InspectorPanel />
      </Workspace>
    </Page>
  );
}
